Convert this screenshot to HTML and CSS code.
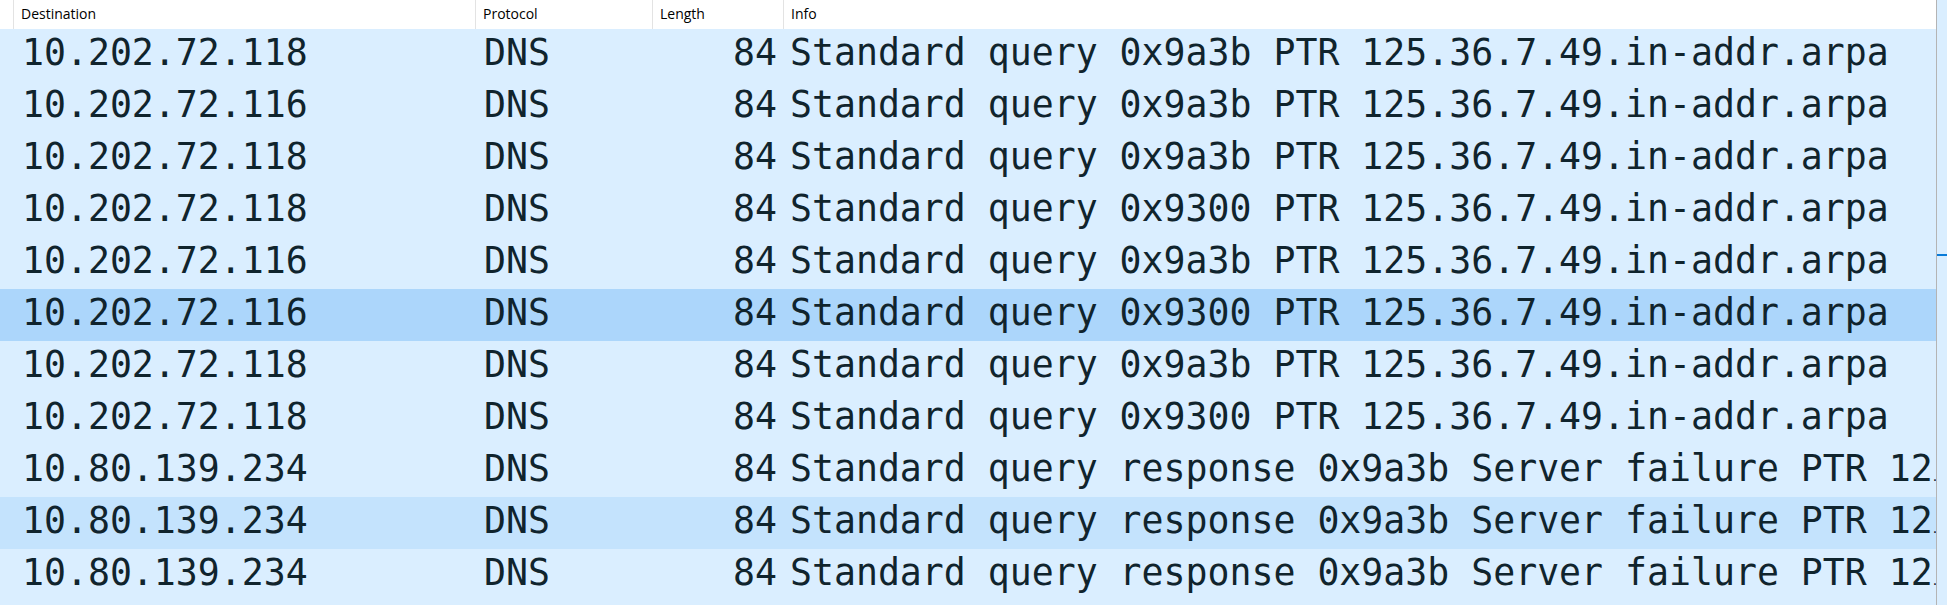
FILE: index.html
```html
<!DOCTYPE html>
<html>
<head>
<meta charset="utf-8">
<link rel="stylesheet" href="styles.css">
</head>
<body>
<div class="frame">
  <div class="table">
    <div class="row head">
      <div class="cell gutter"></div>
      <div class="cell">Destination</div>
      <div class="cell">Protocol</div>
      <div class="cell">Length</div>
      <div class="cell">Info</div>
    </div>
    <div class="row pkt"><div class="cell gutter"></div><div class="cell">10.202.72.118</div><div class="cell">DNS</div><div class="cell num">84</div><div class="cell info">Standard query 0x9a3b PTR 125.36.7.49.in-addr.arpa</div></div>
    <div class="row pkt"><div class="cell gutter"></div><div class="cell">10.202.72.116</div><div class="cell">DNS</div><div class="cell num">84</div><div class="cell info">Standard query 0x9a3b PTR 125.36.7.49.in-addr.arpa</div></div>
    <div class="row pkt"><div class="cell gutter"></div><div class="cell">10.202.72.118</div><div class="cell">DNS</div><div class="cell num">84</div><div class="cell info">Standard query 0x9a3b PTR 125.36.7.49.in-addr.arpa</div></div>
    <div class="row pkt"><div class="cell gutter"></div><div class="cell">10.202.72.118</div><div class="cell">DNS</div><div class="cell num">84</div><div class="cell info">Standard query 0x9300 PTR 125.36.7.49.in-addr.arpa</div></div>
    <div class="row pkt"><div class="cell gutter"></div><div class="cell">10.202.72.116</div><div class="cell">DNS</div><div class="cell num">84</div><div class="cell info">Standard query 0x9a3b PTR 125.36.7.49.in-addr.arpa</div></div>
    <div class="row pkt selected"><div class="cell gutter"></div><div class="cell">10.202.72.116</div><div class="cell">DNS</div><div class="cell num">84</div><div class="cell info">Standard query 0x9300 PTR 125.36.7.49.in-addr.arpa</div></div>
    <div class="row pkt"><div class="cell gutter"></div><div class="cell">10.202.72.118</div><div class="cell">DNS</div><div class="cell num">84</div><div class="cell info">Standard query 0x9a3b PTR 125.36.7.49.in-addr.arpa</div></div>
    <div class="row pkt"><div class="cell gutter"></div><div class="cell">10.202.72.118</div><div class="cell">DNS</div><div class="cell num">84</div><div class="cell info">Standard query 0x9300 PTR 125.36.7.49.in-addr.arpa</div></div>
    <div class="row pkt"><div class="cell gutter"></div><div class="cell">10.80.139.234</div><div class="cell">DNS</div><div class="cell num">84</div><div class="cell info">Standard query response 0x9a3b Server failure PTR 12<span class="cut">…</span></div></div>
    <div class="row pkt hover"><div class="cell gutter"></div><div class="cell">10.80.139.234</div><div class="cell">DNS</div><div class="cell num">84</div><div class="cell info">Standard query response 0x9a3b Server failure PTR 12<span class="cut">…</span></div></div>
    <div class="row pkt"><div class="cell gutter"></div><div class="cell">10.80.139.234</div><div class="cell">DNS</div><div class="cell num">84</div><div class="cell info">Standard query response 0x9a3b Server failure PTR 12<span class="cut">…</span></div></div>
  </div>
  <div class="divider"></div>
  <div class="strip"><div class="mark"></div></div>
</div>
</body>
</html>
```

FILE: styles.css
```css
html, body {
  margin: 0;
  padding: 0;
  height: 100%;
  overflow: hidden;
  background: #daeeff;
}

.frame {
  display: flex;
  height: 605px;
}

.table {
  width: 1936px;
  flex: none;
  background: #daeeff;
  overflow: hidden;
}

.row {
  display: grid;
  grid-template-columns: 13px 462px 177px 131px 1fr;
}

.head {
  height: 29px;
  background: #ffffff;
  font-family: "Open Sans", "Noto Sans", sans-serif;
  font-size: 14px;
  color: #000;
}

.head .cell {
  border-left: 1px solid #e3e3e3;
  padding-left: 7px;
  line-height: 27px;
  padding-bottom: 2px;
  white-space: nowrap;
  overflow: hidden;
}

.head .gutter {
  border-left: none;
}

.pkt {
  height: 52px;
  background: #daeeff;
  font-family: "DejaVu Sans Mono", monospace;
  font-size: 36.5px;
  color: #10242d;
}

.pkt .cell {
  line-height: 48px;
  padding-bottom: 4px;
  padding-left: 9px;
  white-space: nowrap;
  overflow: hidden;
}

.pkt .gutter {
  padding: 0;
}

.pkt .num {
  text-align: right;
  padding-left: 0;
  padding-right: 6px;
}

.pkt .info {
  padding-left: 7px;
}

.pkt.selected {
  background: #acd6fb;
}

.pkt.hover {
  background: #c4e3fd;
}

.cut {
  font-size: 12px;
  margin-left: 1px;
}

.divider {
  width: 1px;
  flex: none;
  background: #b4b4b4;
}

.strip {
  flex: 1;
  background: #daeeff;
  position: relative;
}

.mark {
  position: absolute;
  left: 0;
  right: 0;
  top: 254px;
  height: 2px;
  background: #0a7bd8;
}
```
